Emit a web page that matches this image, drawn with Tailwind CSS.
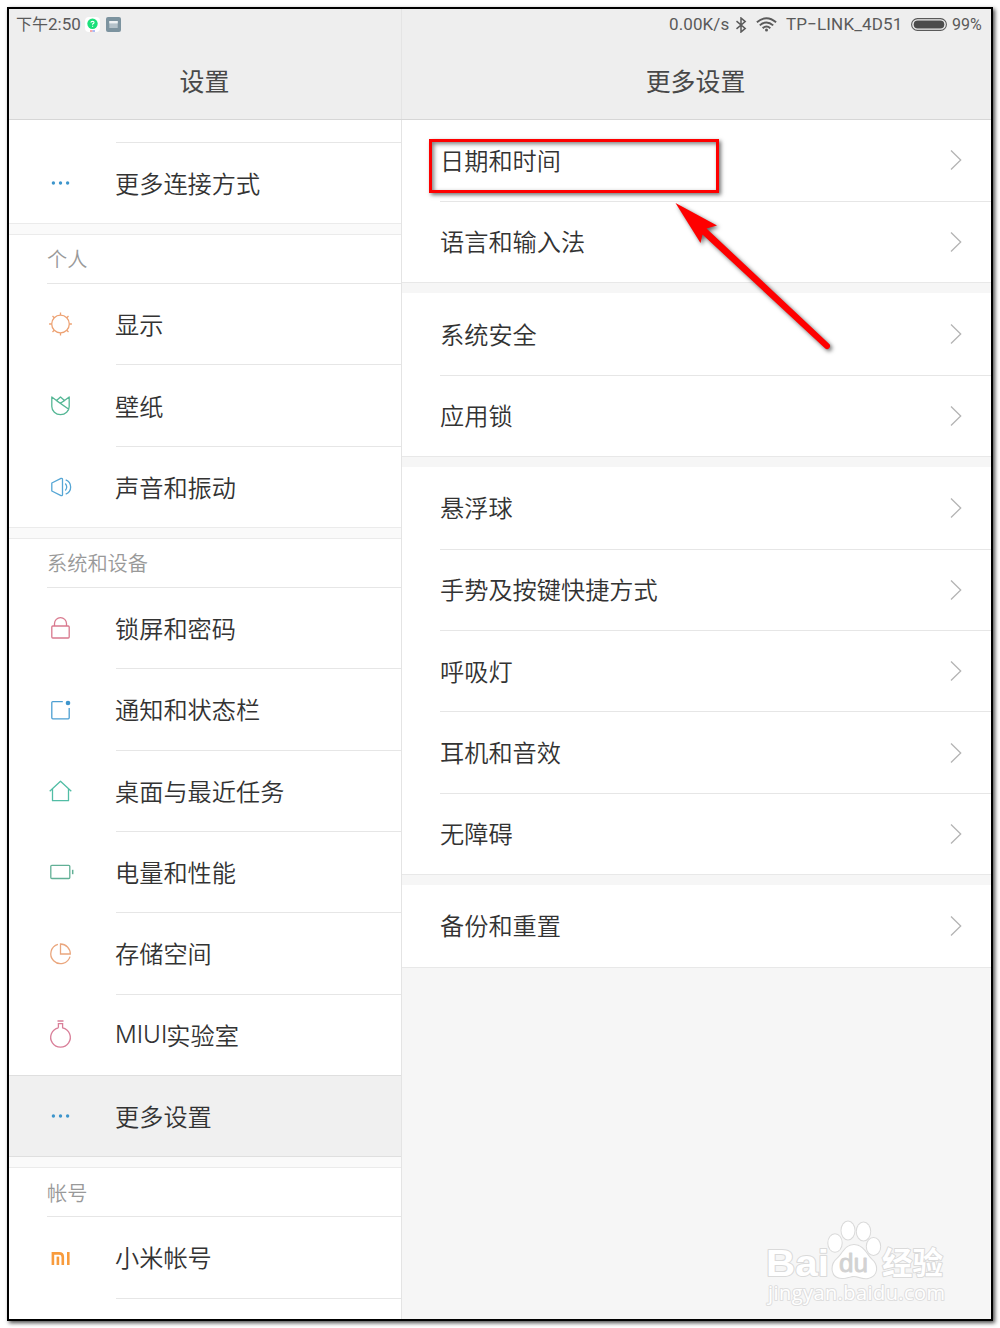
<!DOCTYPE html>
<html lang="zh-CN">
<head>
  <meta charset="UTF-8">
  <meta name="viewport" content="width=device-width, initial-scale=1">
  <title>更多设置</title>
  <script src="https://cdn.jsdelivr.net/npm/@tailwindcss/browser@4"></script>
</head>
<body class="bg-white w-[1000px] h-[1328px] pl-[7px] pt-[7px] overflow-hidden font-['Noto_Sans_CJK_SC',sans-serif] text-[#333]">

  <svg class="hidden">
    <symbol id="chevron" viewBox="0 0 12 22">
      <path d="M1 1.5 L10.7 11 L1 20.5" fill="none" stroke="#b4b4b4" stroke-width="1.3"/>
    </symbol>
    <symbol id="dots" viewBox="0 0 28 28">
      <g fill="#3d95cc"><circle cx="6.4" cy="14" r="1.7"/><circle cx="13.5" cy="14" r="1.7"/><circle cx="20.6" cy="14" r="1.7"/></g>
    </symbol>
  </svg>

  <div class="relative w-[986px] h-[1314px] border-2 border-black shadow-[2px_2px_4px_rgba(0,0,0,0.7)] flex flex-col overflow-hidden bg-[#f6f6f6]">

    <!-- Status bar + titles -->
    <header class="h-[111px] shrink-0 bg-[#eeeeee] border-b border-[#d6d6d6] flex flex-col">
      <div class="h-[31px] flex items-center justify-between pl-[7px] pr-2 text-[#5a5a5a] font-['Roboto','Noto_Sans_CJK_SC',sans-serif] text-[17px] leading-none">
        <div class="flex items-center">
          <span class="w-[62px] whitespace-nowrap text-[16px]">下午<span class="text-[17px]">2:50</span></span>
          <svg class="w-[15px] h-[15px] ml-[7px]" viewBox="0 0 15 15">
            <rect width="15" height="15" rx="4" fill="#fff"/>
            <circle cx="7.5" cy="6.7" r="5.2" fill="#1be07a"/>
            <path d="M5.9 5.6 Q6 4.2 7.5 4.2 Q9.1 4.3 9 5.6 Q8.9 6.4 7.6 7.1 V7.8 M7.6 8.8 V9.7" fill="none" stroke="#fff" stroke-width="1.1"/>
            <path d="M5 14 h2.5" stroke="#e55" stroke-width="1"/><path d="M7.5 14 h2.5" stroke="#57e" stroke-width="1"/>
          </svg>
          <svg class="w-[15px] h-[15px] ml-[6px]" viewBox="0 0 15 15">
            <rect width="15" height="15" rx="2" fill="#7c939f"/>
            <rect x="3.3" y="4" width="8.4" height="7" fill="#b4c2ca"/>
            <rect x="3.3" y="4" width="8.4" height="2.4" fill="#eef2f4"/>
          </svg>
        </div>
        <div class="flex items-center">
          <span class="w-[58px] whitespace-nowrap tracking-[0.1px]">0.00K/s</span>
          <svg class="w-3 h-4 ml-[8px]" viewBox="0 0 12 16" fill="none" stroke="#5a5a5a" stroke-width="1.5">
            <path d="M1.5 4.2 L10.2 11.4 L6 15 V1 L10.2 4.6 L1.5 11.8"/>
          </svg>
          <svg class="w-[21px] h-[15px] ml-[9px]" viewBox="0 0 21 15" fill="none" stroke="#5a5a5a" stroke-width="1.9">
            <path d="M0.9 5.3 Q10.5 -3 20.1 5.3"/><path d="M3.8 8.4 Q10.5 2.4 17.2 8.4"/><path d="M6.7 11.2 Q10.5 7.6 14.3 11.2"/>
            <circle cx="10.5" cy="13" r="1.5" fill="#5a5a5a" stroke="none"/>
          </svg>
          <span class="w-[118px] ml-[9px] whitespace-nowrap tracking-[0.15px]">TP−LINK_4D51</span>
          <svg class="w-[36px] h-[13px] ml-[7px]" viewBox="0 0 36 13">
            <rect x="0.6" y="0.6" width="34.8" height="11.8" rx="5.9" fill="none" stroke="#5a5a5a" stroke-width="1.1"/>
            <rect x="2.7" y="2.6" width="30.6" height="7.8" rx="3.9" fill="#4c4c4c"/>
          </svg>
          <span class="w-[31px] ml-[5px] whitespace-nowrap text-[16px]">99%</span>
        </div>
      </div>
      <div class="flex flex-1 text-[24.9px] leading-none text-[#484848] pt-[28px]">
        <h1 class="w-[391px] text-center">设置</h1>
        <h1 class="flex-1 text-center">更多设置</h1>
      </div>
    </header>

    <div class="flex flex-1 min-h-0 text-[24.2px] leading-none">

      <!-- Left: settings menu -->
      <nav class="w-[393px] shrink-0 bg-white border-r border-[#e4e4e4] overflow-hidden font-[350]">
        <div class="h-[21.8px]"></div>
        <div class="flex pl-[38px] h-[81.33px]">
          <div class="w-[69px] flex items-center pt-px"><svg class="size-7"><use href="#dots"/></svg></div>
          <div class="flex-1 flex items-center border-t border-[#e6e6e6] -indent-px">更多连接方式</div>
        </div>

        <div class="h-[11.6px] bg-[#fafafa] border-y border-[#ebebeb]"></div>
        <h2 class="h-[48.4px] pl-[38px] pt-px flex items-center text-[20.2px] text-[#999]">个人</h2>
        <div class="flex pl-[38px] h-[81.33px]">
          <div class="w-[69px] flex items-center border-t border-[#e6e6e6]">
            <svg class="size-7" viewBox="0.5 0 28 28" fill="none" stroke="#eda273" stroke-width="1.3">
              <circle cx="14" cy="14" r="8.8"/>
              <path d="M14 5 V2.6 M14 23 V25.4 M5 14 H2.6 M23 14 H25.4 M7.7 7.7 L6 6 M20.3 7.7 L22 6 M7.7 20.3 L6 22 M20.3 20.3 L22 22"/>
            </svg>
          </div>
          <div class="flex-1 flex items-center border-t border-[#e6e6e6] -indent-px">显示</div>
        </div>
        <div class="flex pl-[38px] h-[81.33px]">
          <div class="w-[69px] flex items-center pt-px">
            <svg class="size-7" viewBox="0.5 0 28 28" fill="none" stroke="#55b795" stroke-width="1.3" stroke-linejoin="round">
              <path d="M5.3 5 L10 8.6 L14 5 L18 8.6 L22.7 5 V14.5 A8.7 8.2 0 0 1 5.3 14.5 Z M10 8.6 L22.3 17.3 M13.7 11.3 L18 8.6"/>
            </svg>
          </div>
          <div class="flex-1 flex items-center border-t border-[#e6e6e6] -indent-px">壁纸</div>
        </div>
        <div class="flex pl-[38px] h-[81.33px]">
          <div class="w-[69px] flex items-center pt-px">
            <svg class="size-7" viewBox="0.5 0 28 28" fill="none" stroke="#55a6d5" stroke-width="1.3" stroke-linejoin="round">
              <path d="M5.3 10 L14.5 5.4 Q16 5 16 6.5 V21.5 Q16 23 14.5 22.6 L5.3 18 Z"/>
              <path d="M18.8 10.5 Q21.6 14 18.8 17.5 M19.2 6.8 C25.8 9.5 25.8 18.5 19.2 21.2"/>
            </svg>
          </div>
          <div class="flex-1 flex items-center border-t border-[#e6e6e6] -indent-px">声音和振动</div>
        </div>

        <div class="h-[11.6px] bg-[#fafafa] border-y border-[#ebebeb]"></div>
        <h2 class="h-[48.4px] pl-[38px] pt-px flex items-center text-[20.2px] text-[#999]">系统和设备</h2>
        <div class="flex pl-[38px] h-[81.33px]">
          <div class="w-[69px] flex items-center border-t border-[#e6e6e6]">
            <svg class="size-7" viewBox="0.5 0 28 28" fill="none" stroke="#d9798e" stroke-width="1.3">
              <rect x="5.3" y="12" width="17.4" height="12" rx="1"/>
              <path d="M8 12 V9.5 A6 5.8 0 0 1 20 9.5 V12"/>
            </svg>
          </div>
          <div class="flex-1 flex items-center border-t border-[#e6e6e6] -indent-px">锁屏和密码</div>
        </div>
        <div class="flex pl-[38px] h-[81.33px]">
          <div class="w-[69px] flex items-center pt-px">
            <svg class="size-7" viewBox="0.5 0 28 28" fill="none" stroke="#4c9fd2" stroke-width="1.3">
              <path d="M16.3 5.6 H6.3 Q5.3 5.6 5.3 6.6 V21.8 Q5.3 22.8 6.3 22.8 H21.7 Q22.7 22.8 22.7 21.8 V12"/>
              <circle cx="21.5" cy="7" r="2.3" fill="#3d95cc" stroke="none"/>
            </svg>
          </div>
          <div class="flex-1 flex items-center border-t border-[#e6e6e6] -indent-px">通知和状态栏</div>
        </div>
        <div class="flex pl-[38px] h-[81.33px]">
          <div class="w-[69px] flex items-center pt-px">
            <svg class="size-7" viewBox="0.5 0 28 28" fill="none" stroke="#52bda5" stroke-width="1.3" stroke-linejoin="round">
              <path d="M3.2 14.3 L14 4.3 L24.8 14.3 M6 12 V23.7 H22 V12"/>
            </svg>
          </div>
          <div class="flex-1 flex items-center border-t border-[#e6e6e6] -indent-px">桌面与最近任务</div>
        </div>
        <div class="flex pl-[38px] h-[81.33px]">
          <div class="w-[69px] flex items-center pt-px">
            <svg class="size-7" viewBox="0.5 0 28 28" fill="none" stroke="#62b096" stroke-width="1.3">
              <rect x="4.3" y="7.3" width="19" height="13.2" rx="1"/>
              <path d="M26.2 11.8 V16.2" stroke-width="1.5"/>
            </svg>
          </div>
          <div class="flex-1 flex items-center border-t border-[#e6e6e6] -indent-px">电量和性能</div>
        </div>
        <div class="flex pl-[38px] h-[81.33px]">
          <div class="w-[69px] flex items-center pt-px">
            <svg class="size-7" viewBox="0.5 0 28 28" fill="none" stroke="#eaa67d" stroke-width="1.3">
              <path d="M11.4 4.4 A9.8 9.8 0 1 0 23.5 16.6"/>
              <path d="M14 4 V14 H23.8 A9.8 9.8 0 0 0 14 4 Z"/>
            </svg>
          </div>
          <div class="flex-1 flex items-center border-t border-[#e6e6e6] -indent-px">存储空间</div>
        </div>
        <div class="flex pl-[38px] h-[81.33px]">
          <div class="w-[69px] flex items-center">
            <svg class="size-7" viewBox="0.5 0 28 28" fill="none" stroke="#d97f99" stroke-width="1.3">
              <path d="M11 1 H17 M11.9 7.8 V3.6 H16.1 V7.8 A9.8 9.8 0 1 1 11.9 7.8"/>
            </svg>
          </div>
          <div class="flex-1 flex items-center border-t border-[#e6e6e6] -indent-px"><span class="font-['Inter','Noto_Sans_CJK_SC',sans-serif] font-light">MIUI</span>实验室</div>
        </div>
        <div class="flex pl-[38px] h-[81.33px] bg-[#f0f0f0] border-t border-[#dfdfdf]">
          <div class="w-[69px] flex items-center"><svg class="size-7"><use href="#dots"/></svg></div>
          <div class="flex-1 flex items-center -indent-px">更多设置</div>
        </div>

        <div class="h-[11.6px] bg-[#fafafa] border-y border-t-[#dfdfdf] border-b-[#ebebeb]"></div>
        <h2 class="h-[48.4px] pl-[38px] pt-px flex items-center text-[20.2px] text-[#999]">帐号</h2>
        <div class="flex pl-[38px] h-[81.33px]">
          <div class="w-[69px] flex items-center border-t border-[#e6e6e6]">
            <svg class="size-7" viewBox="0.5 0 28 28" fill="none" stroke="#f89b3c" stroke-width="2.6">
              <path d="M6.4 21 V9.4 H12.6 Q16.3 9.4 16.3 13 V21 M21.8 8.1 V21"/>
              <path d="M11.4 12.6 V21"/>
            </svg>
          </div>
          <div class="flex-1 flex items-center border-t border-[#e6e6e6] -indent-px">小米帐号</div>
        </div>
        <div class="ml-[107px] border-t border-[#e6e6e6]"></div>
      </nav>

      <!-- Right: more settings -->
      <main class="flex-1 font-[350] -mt-[0.5px]">
        <section class="bg-white border-b border-[#e8e8e8] pl-[38px]">
          <div class="flex items-center justify-between h-[81.33px] pr-[29px]"><span class="pb-px">日期和时间</span><svg class="w-3 h-[22px]"><use href="#chevron"/></svg></div>
          <div class="flex items-center justify-between h-[81.33px] pr-[29px] border-t border-[#e6e6e6]"><span class="pb-px">语言和输入法</span><svg class="w-3 h-[22px]"><use href="#chevron"/></svg></div>
        </section>
        <section class="mt-[10.3px] bg-white border-b border-[#e8e8e8] pl-[38px]">
          <div class="flex items-center justify-between h-[81.33px] pr-[29px]"><span class="pb-px">系统安全</span><svg class="w-3 h-[22px]"><use href="#chevron"/></svg></div>
          <div class="flex items-center justify-between h-[81.33px] pr-[29px] border-t border-[#e6e6e6]"><span class="pb-px">应用锁</span><svg class="w-3 h-[22px]"><use href="#chevron"/></svg></div>
        </section>
        <section class="mt-[10.3px] bg-white border-b border-[#e8e8e8] pl-[38px]">
          <div class="flex items-center justify-between h-[81.33px] pr-[29px]"><span class="pb-px">悬浮球</span><svg class="w-3 h-[22px]"><use href="#chevron"/></svg></div>
          <div class="flex items-center justify-between h-[81.33px] pr-[29px] border-t border-[#e6e6e6]"><span class="pb-px">手势及按键快捷方式</span><svg class="w-3 h-[22px]"><use href="#chevron"/></svg></div>
          <div class="flex items-center justify-between h-[81.33px] pr-[29px] border-t border-[#e6e6e6]"><span class="pb-px">呼吸灯</span><svg class="w-3 h-[22px]"><use href="#chevron"/></svg></div>
          <div class="flex items-center justify-between h-[81.33px] pr-[29px] border-t border-[#e6e6e6]"><span class="pb-px">耳机和音效</span><svg class="w-3 h-[22px]"><use href="#chevron"/></svg></div>
          <div class="flex items-center justify-between h-[81.33px] pr-[29px] border-t border-[#e6e6e6]"><span class="pb-px">无障碍</span><svg class="w-3 h-[22px]"><use href="#chevron"/></svg></div>
        </section>
        <section class="mt-[10.3px] bg-white border-b border-[#e8e8e8] pl-[38px]">
          <div class="flex items-center justify-between h-[81.33px] pr-[29px]"><span class="pb-px">备份和重置</span><svg class="w-3 h-[22px]"><use href="#chevron"/></svg></div>
        </section>
      </main>
    </div>

    <!-- Column divider in the header -->
    <div class="absolute left-[392px] top-0 w-px h-[110px] bg-[#e4e4e4]"></div>

    <!-- Highlight box and arrow -->
    <div class="absolute left-[420px] top-[130px] w-[290px] h-[54px] border-3 border-[#fe0000] shadow-[2px_2px_4px_rgba(0,0,0,0.55),inset_2px_2px_4px_rgba(0,0,0,0.5)]"></div>
    <svg class="absolute left-[661px] top-[188px] w-[170px] h-[165px] drop-shadow-[2px_2px_2px_rgba(0,0,0,0.6)]" viewBox="670 197 170 165">
      <path d="M675.5 203 L717 225.5 L706.5 228.5 L829 343.8 A2.9 2.9 0 0 1 825 348.3 L702.5 234.5 L700.5 243 Z" fill="#fe0000"/>
    </svg>

    <!-- Watermark -->
    <svg class="absolute left-[751px] top-[1204px] w-[200px] h-[100px]" viewBox="760 1213 200 100" fill="#fff" stroke="#dadada" stroke-width="2" paint-order="stroke" stroke-linejoin="round">
      <text x="766" y="1276" font-family="Liberation Sans" font-weight="700" font-size="37" textLength="63" lengthAdjust="spacingAndGlyphs">Bai</text>
      <ellipse cx="835" cy="1243" rx="6.7" ry="8.7"/>
      <ellipse cx="848" cy="1230.5" rx="6.5" ry="9"/>
      <ellipse cx="863.5" cy="1231.5" rx="6.7" ry="9"/>
      <ellipse cx="873.5" cy="1246.5" rx="6.7" ry="8.5"/>
      <path d="M854 1245 C845 1245 843 1254 837 1259 C830 1265 831 1278 842 1278 C848 1278 850 1276 854 1276 C858 1276 862 1279 868 1278 C878 1276 878 1265 872 1260 C866 1254 863 1245 854 1245 Z"/>
      <text x="839" y="1272" font-family="Liberation Sans" font-weight="400" font-size="25" fill="#d2d2d2" stroke="#d2d2d2" stroke-width="0.8" textLength="29" lengthAdjust="spacingAndGlyphs">du</text>
      <text x="882" y="1274" font-family="Noto Sans CJK SC" font-weight="700" font-size="30.5">经验</text>
      <text x="768" y="1300" font-family="Open Sans" font-size="20" stroke="#dedede" stroke-width="2" textLength="177">jingyan.baidu.com</text>
    </svg>
  </div>
</body>
</html>
